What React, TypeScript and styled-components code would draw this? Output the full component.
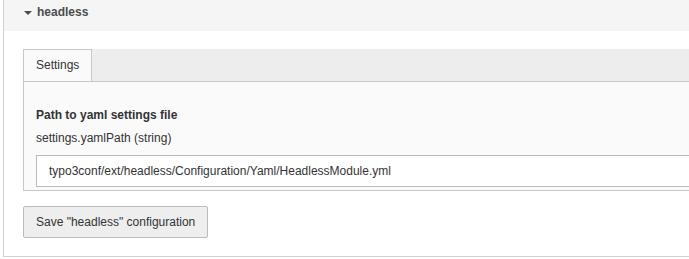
import styled, { createGlobalStyle } from "styled-components"

const GlobalStyle = createGlobalStyle`
    html, body {
        margin: 0;
        padding: 0;
        background: #ffffff;
        overflow: hidden;
    }
    body {
        font-family: "Liberation Sans", Arial, sans-serif;
        font-size: 12px;
        color: #333333;
    }
`

const App = () => {
    return (
        <>
            <GlobalStyle />
            <Page>
                <Panel>
                    <Heading>
                        <Caret />
                        <span>headless</span>
                    </Heading>
                    <Body>
                        <Tabs>
                            <TabBar>
                                <Tab $active>Settings</Tab>
                            </TabBar>
                            <TabContent>
                                <Label>Path to yaml settings file</Label>
                                <Description>settings.yamlPath (string)</Description>
                                <Input
                                    type="text"
                                    defaultValue="typo3conf/ext/headless/Configuration/Yaml/HeadlessModule.yml"
                                />
                            </TabContent>
                        </Tabs>
                        <Button type="button">Save "headless" configuration</Button>
                    </Body>
                </Panel>
            </Page>
        </>
    )
}

export default App

const Page = styled.div`
    width: 760px;
    padding-left: 3px;
`

const Panel = styled.section`
    border: 1px solid #d2d2d2;
    border-top: none;
    background: #ffffff;
    box-shadow: 0 1px 1px rgba(0, 0, 0, 0.06);
`

const Heading = styled.div`
    display: flex;
    align-items: center;
    gap: 5px;
    box-sizing: border-box;
    height: 31px;
    padding: 0 0 7px 20px;
    background: #f5f5f5;
    font-weight: bold;
    color: #4c4c4c;
    line-height: 14px;
`

const Caret = styled.i`
    display: inline-block;
    width: 0;
    height: 0;
    border-left: 4px solid transparent;
    border-right: 4px solid transparent;
    border-top: 4px solid #4c4c4c;
    margin-top: 1px;
`

const Body = styled.div`
    padding: 18px 0 18px 19px;
`

const Tabs = styled.div`
    margin-bottom: 15px;
`

const TabBar = styled.ul`
    display: flex;
    margin: 0;
    padding: 0;
    list-style: none;
    background: #ededed;
    border-bottom: 1px solid #c8c8c8;
`

const Tab = styled.li<{ $active?: boolean }>`
    box-sizing: border-box;
    height: 32px;
    padding: 0 12px;
    line-height: 31px;
    background: ${(p) => (p.$active ? "#fafafa" : "transparent")};
    border: 1px solid ${(p) => (p.$active ? "#c8c8c8" : "transparent")};
    border-bottom: none;
    color: #333333;
    cursor: pointer;
`

const TabContent = styled.div`
    padding: 24px 0 3px 12px;
    background: #fafafa;
    border-left: 1px solid #c8c8c8;
    border-bottom: 1px solid #c8c8c8;
`

const Label = styled.div`
    font-weight: bold;
    line-height: 18px;
    color: #333333;
`

const Description = styled.div`
    margin-top: 5px;
    line-height: 18px;
    color: #333333;
`

const Input = styled.input`
    display: block;
    box-sizing: border-box;
    width: 100%;
    height: 32px;
    margin-top: 8px;
    padding: 0 12px;
    border: 1px solid #bbbbbb;
    border-radius: 0;
    background: #ffffff;
    font-family: "Liberation Sans", Arial, sans-serif;
    font-size: 12px;
    color: #333333;
    outline: none;
`

const Button = styled.button`
    box-sizing: border-box;
    height: 32px;
    padding: 0 12px;
    border: 1px solid #bbbbbb;
    border-radius: 2px;
    background: #eeeeee;
    font-family: "Liberation Sans", Arial, sans-serif;
    font-size: 12px;
    color: #333333;
    cursor: pointer;
`
